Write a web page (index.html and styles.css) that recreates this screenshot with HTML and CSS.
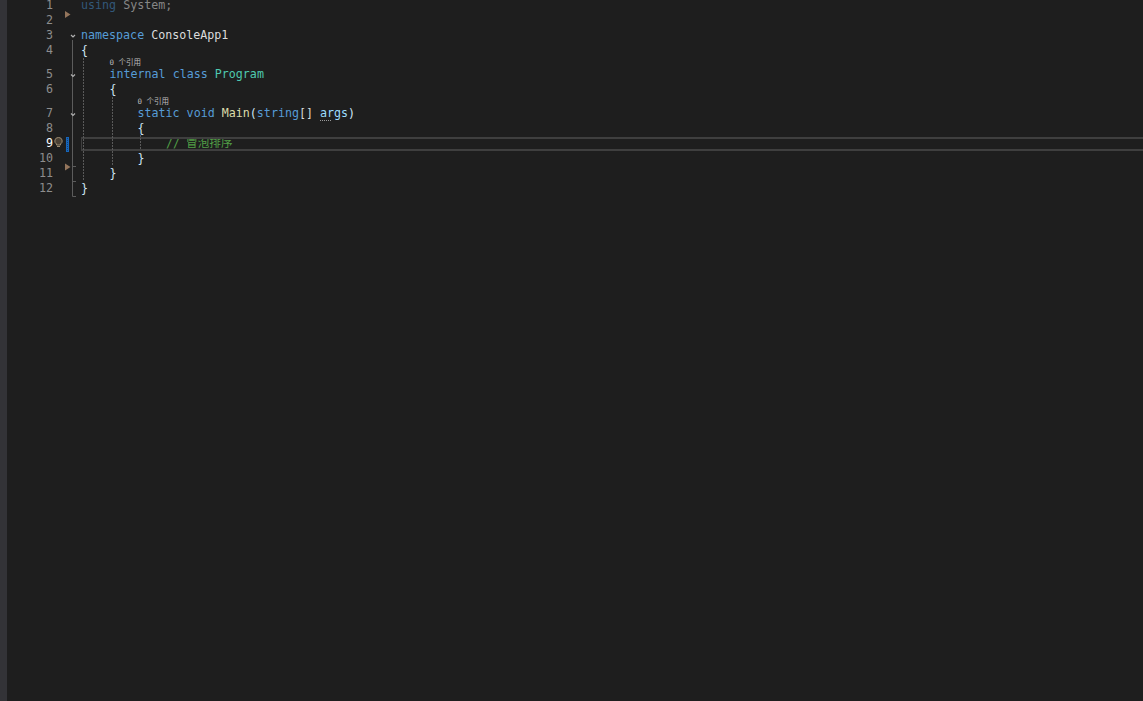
FILE: index.html
```html
<!DOCTYPE html>
<html lang="zh">
<head>
<meta charset="utf-8">
<title>ConsoleApp1</title>
<link rel="stylesheet" href="styles.css">
</head>
<body>
<div class="window">
  <div class="strip"></div>
  <main class="editor">
    <div class="row"><span class="num">1</span><span class="mark"></span><code class="code"><span class="faded">using</span> <span class="faded-t">System;</span></code></div>
    <div class="row"><span class="num">2</span><span class="mark"></span><code class="code"></code></div>
    <div class="row"><span class="num">3</span><span class="mark"></span><code class="code"><span class="kw">namespace</span> ConsoleApp1</code></div>
    <div class="row"><span class="num">4</span><span class="mark"></span><code class="code"><span class="br">{</span></code></div>
    <div class="lens i1">0 个引用</div>
    <div class="row"><span class="num">5</span><span class="mark"></span><code class="code i1"><span class="kw">internal class</span> <span class="cls">Program</span></code></div>
    <div class="row"><span class="num">6</span><span class="mark"></span><code class="code i1"><span class="br">{</span></code></div>
    <div class="lens i2">0 个引用</div>
    <div class="row"><span class="num">7</span><span class="mark"></span><code class="code i2"><span class="kw">static void</span> <span class="fn">Main</span><span class="br">(</span><span class="kw">string</span>[] <span class="arg">args</span><span class="br">)</span></code></div>
    <div class="row"><span class="num">8</span><span class="mark"></span><code class="code i2"><span class="br">{</span></code></div>
    <div class="row active"><span class="num">9</span><span class="mark"><span class="change"></span></span><code class="code i3"><span class="cmt">// 冒泡排序</span></code></div>
    <div class="row"><span class="num">10</span><span class="mark"></span><code class="code i2"><span class="br">}</span></code></div>
    <div class="row"><span class="num">11</span><span class="mark"></span><code class="code i1"><span class="br">}</span></code></div>
    <div class="row"><span class="num">12</span><span class="mark"></span><code class="code"><span class="br">}</span></code></div>

    <svg class="overlay" width="400" height="204" viewBox="0 0 400 204" aria-hidden="true">
      <path class="fold" d="M65 11 L70.5 14.5 L65 18 Z"/>
      <path class="fold" d="M65 163.5 L70.5 167 L65 170.5 Z"/>
      <path class="fold-line" d="M72.5 40V196.5M72.5 166.5H76M72.5 181.5H76M72.5 196.5H76"/>
      <path class="chev" d="M71 35L73 37L75 35M71 74.5L73 76.5L75 74.5M71 113.5L73 115.5L75 113.5"/>
      <path class="guide" d="M83.5 58V180M112.5 97V165M140.5 135V150"/>
      <path class="squiggle" d="M320 120.5H331"/>
      <g class="bulb">
        <path class="bulb-glass" d="M58.5 137.5A3.5 3.5 0 0 0 56.5 144V145H60.5V144A3.5 3.5 0 0 0 58.5 137.5Z"/>
        <path class="bulb-base" d="M57 146.5H60"/>
      </g>
    </svg>
  </main>
</div>
</body>
</html>
```
FILE: styles.css
```css
html, body {
  margin: 0;
  height: 100%;
  background: #1e1e1e;
  overflow: hidden;
}

.window {
  display: flex;
  height: 701px;
  overflow: hidden;
}

.strip {
  flex: 0 0 7px;
  background: #333337;
}

.editor {
  position: relative;
  flex: 1;
  margin-top: -2px;
  font-family: "DejaVu Sans Mono", "Noto Sans CJK SC", monospace;
  font-size: 11.66px;
  color: #dcdcdc;
}

.row {
  display: flex;
  height: 15px;
  line-height: 15px;
  white-space: pre;
}

.num {
  flex: 0 0 46px;
  text-align: right;
  color: #8d8d8d;
}

.mark {
  flex: 0 0 28px;
  position: relative;
}

.change {
  position: absolute;
  left: 13px;
  top: 1px;
  width: 3px;
  height: 15px;
  background: #1766bb;
}

.change::after {
  content: "";
  position: absolute;
  left: 1px;
  top: 1px;
  bottom: 1px;
  border-left: 1px dotted #0e3f78;
}

.code {
  font: inherit;
}

.i1 { margin-left: 28.5px; }
.i2 { margin-left: 56.5px; }
.i3 { margin-left: 85px; }

.active {
  position: relative;
}

.active .num {
  color: #ffffff;
}

.active::after {
  content: "";
  position: absolute;
  left: 74px;
  right: 0;
  top: 1px;
  height: 10px;
  border: solid #3f3f3f;
  border-width: 2px 0 2px 1px;
}

.lens {
  height: 9px;
  line-height: 9px;
  padding-left: 74px;
  font-family: "DejaVu Sans Mono", "Noto Sans CJK SC", monospace;
  font-size: 7.5px;
  color: #bdbdbd;
  margin-left: 28.5px;
}

.lens.i2 { margin-left: 56.5px; }

.kw { color: #569cd6; }
.faded { color: #32587a; }
.faded-t { color: #868686; }
.cls { color: #4ec9b0; }
.fn { color: #dcdcaa; }
.arg { color: #9cdcfe; }
.br { color: #cfe6f5; }
.cmt {
  color: #529e46;
  word-spacing: -1px;
}

.overlay {
  position: absolute;
  left: -7px;
  top: 2px;
  pointer-events: none;
}

.fold { fill: #94755c; }
.fold-line { fill: none; stroke: #5c5c5c; stroke-width: 1; }
.chev { fill: none; stroke: #b0b0b0; stroke-width: 1.2; }
.guide { fill: none; stroke: #5a5a5a; stroke-width: 1; stroke-dasharray: 2 1; }
.squiggle { fill: none; stroke: #9a9a9a; stroke-width: 1; stroke-dasharray: 1 1; }
.bulb-glass { fill: #4a4034; stroke: #9a8a70; stroke-width: 1; }
.bulb-base { fill: none; stroke: #9a8a70; stroke-width: 1; }
```
